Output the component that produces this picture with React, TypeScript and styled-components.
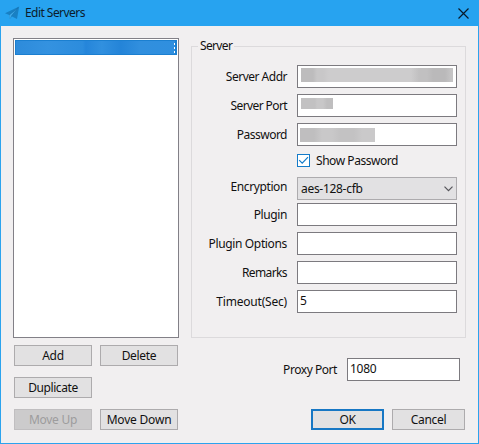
import React from "react";
import styled, { createGlobalStyle, css } from "styled-components";

const GlobalStyle = createGlobalStyle`
  * { box-sizing: border-box; }
  body { margin: 0; overflow: hidden; }
  button, input { font: inherit; letter-spacing: inherit; color: inherit; }
`;

const Dialog = styled.div`
  width: 479px;
  height: 444px;
  display: flex;
  flex-direction: column;
  background: #f1eff0;
  border: solid #2ba3ee;
  border-width: 0 1px 1px;
  font-family: "Noto Sans", "Open Sans", sans-serif;
  font-size: 12px;
  letter-spacing: -0.3px;
  line-height: 16px;
  color: #111;
`;

const TitleBar = styled.header`
  height: 26px;
  flex: none;
  margin: 0 -1px;
  padding: 0 10px 0 5px;
  display: flex;
  align-items: center;
  background: #27a3f0;
`;

const Title = styled.h1`
  flex: 1;
  margin: 0 0 0 5px;
  font-size: 12px;
  font-weight: 400;
  letter-spacing: -0.55px;
  color: #0b1c2c;
`;

const Columns = styled.main`
  display: flex;
  gap: 12px;
  padding: 12px 12px 0 12px;
`;

const LeftColumn = styled.section`
  width: 166px;
  flex: none;
`;

const ServerList = styled.div`
  height: 300px;
  padding: 1px;
  border: 1px solid #828087;
  background: #fff;
`;

const SelectedServer = styled.div`
  height: 15px;
  display: flex;
  align-items: center;
  justify-content: flex-end;
  border: 1px solid #1b7fd0;
  border-right-width: 2px;
  background: linear-gradient(90deg, #2d8bdb, #3492e0 20%, #2c8cdd 42%, #2585da 44%, #3190df 54%, #2484d8 66%, #318fde 78%, #2f8fdf);
`;

const ServerButtons = styled.div`
  display: grid;
  grid-template-columns: 78px 78px;
  grid-auto-rows: 21px;
  gap: 11px 8px;
  margin: 7px 0 0 1px;
`;

const Button = styled.button<{ $primary?: boolean; $column?: number; $tracking?: number }>`
  padding: 1px 0 0;
  border: 1px solid #adabad;
  background: #e2e1e2;
  line-height: 16px;
  text-align: center;
  letter-spacing: ${(p) => p.$tracking ?? -0.3}px;
  ${(p) => p.$column && css`grid-column: ${p.$column};`}
  ${(p) => p.$primary && css`border: 2px solid #1777c4; padding: 0;`}
  &:disabled {
    border-color: #c0bec0;
    background: #cccbcc;
    color: #9d9c9d;
  }
`;

const RightColumn = styled.section`
  flex: 1;
  min-width: 0;
`;

const Group = styled.fieldset`
  width: 275px;
  height: 300px;
  margin: 0;
  padding: 11px 8px 0 0;
  border: 1px solid #dcdadc;
`;

const Legend = styled.legend`
  height: 16px;
  margin-left: 6px;
  padding: 0 2px;
  letter-spacing: -0.65px;
`;

const Field = styled.label<{ $gap?: number }>`
  height: 23px;
  display: flex;
  align-items: center;
  justify-content: flex-end;
  gap: 10px;
  margin-bottom: ${(p) => p.$gap ?? 6}px;
`;

const FieldName = styled.span<{ $lift?: number; $tracking?: number }>`
  padding-bottom: ${(p) => p.$lift ?? 0}px;
  letter-spacing: ${(p) => p.$tracking ?? -0.3}px;
  white-space: nowrap;
`;

const Box = styled.div<{ $width?: number }>`
  width: ${(p) => p.$width ?? 160}px;
  height: 23px;
  flex: none;
  display: flex;
  border: 1px solid #7c7a7f;
  background: #fff;
`;

const TextInput = styled.input`
  width: 100%;
  height: 19px;
  padding: 0 2px;
  border: 0;
  outline: 0;
  background: transparent;
`;

const Masked = styled.div<{ $x: number; $y: number; $w: number; $h: number; $fill: string }>`
  width: ${(p) => p.$w}px;
  height: ${(p) => p.$h}px;
  margin: ${(p) => p.$y}px 0 0 ${(p) => p.$x}px;
  background: ${(p) => p.$fill};
`;

const CheckRow = styled.div`
  height: 17px;
  display: flex;
  align-items: center;
  gap: 6px;
  margin: 0 0 8px 105px;
  letter-spacing: -0.45px;
  line-height: 17px;
`;

const CheckBox = styled.span`
  width: 13px;
  height: 13px;
  display: flex;
  border: 1px solid #147bc9;
  background: #fff;
`;

const Select = styled.div`
  width: 160px;
  height: 23px;
  display: flex;
  align-items: center;
  justify-content: space-between;
  padding: 1px 3px 0 3px;
  border: 1px solid #adabae;
  background: #e2e1e3;
`;

const ProxyRow = styled.label`
  display: flex;
  align-items: center;
  justify-content: flex-end;
  gap: 10px;
  margin: 20px 6px 0 0;
`;

const DialogActions = styled.div`
  display: grid;
  grid-template-columns: 73px 73px;
  grid-auto-rows: 21px;
  gap: 8px;
  justify-content: end;
  margin: 28px 1px 0 0;
`;

const fields = [
  { name: "Plugin", value: "", tracking: -0.4 },
  { name: "Plugin Options", value: "", tracking: -0.35 },
  { name: "Remarks", value: "", tracking: -0.6 },
  { name: "Timeout(Sec)", value: "5", tracking: -0.2 },
];

const masked = [
  { name: "Server Addr", tracking: -0.5, x: 3, y: 2, w: 152, h: 14, fill: "linear-gradient(90deg,#bdbcbd 0 12px,#c8c7c8 16px 22px,#cdcccd 28px 110px,#c1c0c1 118px 126px,#bab9ba 132px 144px,#c5c4c5 150px)" },
  { name: "Server Port", tracking: -0.6, x: 3, y: 3, w: 32, h: 11, fill: "linear-gradient(90deg,#c2c1c2 0 14px,#c8c7c8 16px 22px,#bfbebf 26px)" },
  { name: "Password", tracking: -0.5, x: 2, y: 4, w: 75, h: 14, fill: "linear-gradient(90deg,#bfbebf 0 14px,#c9c8c9 22px 32px,#c3c2c3 40px 54px,#cac9ca 62px)" },
];

export default function App() {
  return (
    <>
      <GlobalStyle />
      <Dialog>
        <TitleBar>
          <svg width="15" height="14" viewBox="0 0 15 14">
            <path d="M0 7.2 14.2 .6 12 13 7 10.5 4.7 13 4.2 9Z" fill="#1880c4" />
            <path d="M4.2 9 13 1.7 6.3 10.2 4.7 13Z" fill="#3fa9e9" />
            <path d="M4.2 9 13 1.7 6.3 10.2" fill="none" stroke="#126ead" strokeWidth=".6" />
          </svg>
          <Title>Edit Servers</Title>
          <svg width="11" height="11" viewBox="0 0 11 11" stroke="#081b2b" strokeWidth="1.2">
            <path d="M.5 .5 10.5 10.5M10.5 .5 .5 10.5" />
          </svg>
        </TitleBar>
        <Columns>
          <LeftColumn>
            <ServerList>
              <SelectedServer>
                <svg width="1" height="11" viewBox="0 0 1 11" fill="#fff">
                  <path d="M0 1h1v2h-1zM0 5h1v2h-1zM0 9h1v2h-1z" />
                </svg>
              </SelectedServer>
            </ServerList>
            <ServerButtons>
              <Button>Add</Button>
              <Button>Delete</Button>
              <Button $tracking={-0.4}>Duplicate</Button>
              <Button disabled $column={1}>Move Up</Button>
              <Button $tracking={-0.2}>Move Down</Button>
            </ServerButtons>
          </LeftColumn>
          <RightColumn>
            <Group>
              <Legend>Server</Legend>
              {masked.map((m) => (
                <Field key={m.name}>
                  <FieldName $tracking={m.tracking}>{m.name}</FieldName>
                  <Box>
                    <Masked $x={m.x} $y={m.y} $w={m.w} $h={m.h} $fill={m.fill} />
                  </Box>
                </Field>
              ))}
              <CheckRow>
                <CheckBox>
                  <svg width="11" height="11" viewBox="0 0 11 11" fill="none" stroke="#147bc9" strokeWidth="1.2">
                    <path d="M1.2 5.2 4.2 8.2 10 2.2" />
                  </svg>
                </CheckBox>
                Show Password
              </CheckRow>
              <Field $gap={3}>
                <FieldName $lift={4} $tracking={-0.4}>Encryption</FieldName>
                <Select>
                  aes-128-cfb
                  <svg width="9" height="6" viewBox="0 0 9 6" fill="none" stroke="#55545a" strokeWidth="1.2">
                    <path d="M.5 .7 4.5 4.7 8.5 .7" />
                  </svg>
                </Select>
              </Field>
              {fields.map((f) => (
                <Field key={f.name}>
                  <FieldName $tracking={f.tracking}>{f.name}</FieldName>
                  <Box>
                    <TextInput defaultValue={f.value} />
                  </Box>
                </Field>
              ))}
            </Group>
            <ProxyRow>
              <FieldName $tracking={-0.45}>Proxy Port</FieldName>
              <Box $width={113}>
                <TextInput defaultValue="1080" />
              </Box>
            </ProxyRow>
            <DialogActions>
              <Button $primary>OK</Button>
              <Button>Cancel</Button>
            </DialogActions>
          </RightColumn>
        </Columns>
      </Dialog>
    </>
  );
}
